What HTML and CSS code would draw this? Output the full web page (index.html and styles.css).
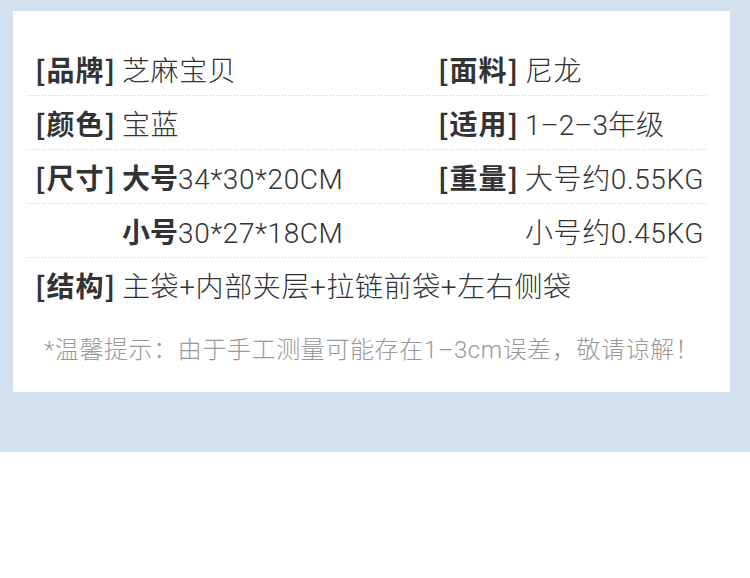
FILE: index.html
```html
<!DOCTYPE html>
<html lang="zh-CN">
<head>
  <meta charset="UTF-8" />
  <title>商品参数</title>
  <link rel="stylesheet" href="styles.css">
</head>
<body>

  <div class="band">
    <div class="card">

      <div class="row">
        <div class="cell"><span class="label">[品牌]</span><span class="value">芝麻宝贝</span></div>
        <div class="cell"><span class="label">[面料]</span><span class="value">尼龙</span></div>
      </div>

      <div class="row">
        <div class="cell"><span class="label">[颜色]</span><span class="value">宝蓝</span></div>
        <div class="cell"><span class="label">[适用]</span><span class="value tight">1–2–3年级</span></div>
      </div>

      <div class="row">
        <div class="cell"><span class="label">[尺寸]</span><span class="value"><b>大号</b>34*30*20CM</span></div>
        <div class="cell"><span class="label">[重量]</span><span class="value">大号约0.55KG</span></div>
      </div>

      <div class="row">
        <div class="cell"><span class="label"></span><span class="value"><b>小号</b>30*27*18CM</span></div>
        <div class="cell"><span class="label"></span><span class="value">小号约0.45KG</span></div>
      </div>

      <div class="row last">
        <div class="cell"><span class="label">[结构]</span><span class="value">主袋+内部夹层+拉链前袋+左右侧袋</span></div>
      </div>

      <p class="note">*温馨提示：由于手工测量可能存在1–3cm误差，敬请谅解！</p>
    </div>
  </div>

</body>
</html>
```

FILE: styles.css
```css
* {
  box-sizing: border-box;
}

body {
  margin: 0;
  padding: 0;
  background: #fff;
  font-family: "Noto Sans CJK SC", "Noto Sans", sans-serif;
  color: #333;
}

.band {
  background: #d3e0ef;
  height: 452px;
  padding: 11px 20px 0 13px;
}

.card {
  background: #fff;
  height: 381px;
  padding: 31px 22px 0 14px;
}

.row {
  display: grid;
  grid-template-columns: 403px 1fr;
  height: 54px;
  padding-left: 8px;
  background: linear-gradient(to right, #c9c9c9 1px, transparent 1px) repeat-x left bottom / 3px 1px;
}

.row.last {
  background: none;
  grid-template-columns: 1fr;
}

.cell {
  font-size: 28px;
  line-height: 54px;
  white-space: nowrap;
}

.label {
  display: inline-block;
  width: 87px;
  font-weight: 700;
  color: #333;
  letter-spacing: 1px;
}

.value {
  font-family: Roboto, "Noto Sans CJK SC", sans-serif;
  font-weight: 300;
  color: #333;
  letter-spacing: 0.6px;
}

.value.tight {
  letter-spacing: 0;
}

.value b {
  font-family: "Noto Sans CJK SC", sans-serif;
  font-weight: 700;
  letter-spacing: 0;
}

.note {
  margin: 18px 0 0 17px;
  font-family: Roboto, "Noto Sans CJK SC", sans-serif;
  font-size: 24px;
  font-weight: 300;
  color: #999;
  letter-spacing: 0.6px;
  white-space: nowrap;
}
```
